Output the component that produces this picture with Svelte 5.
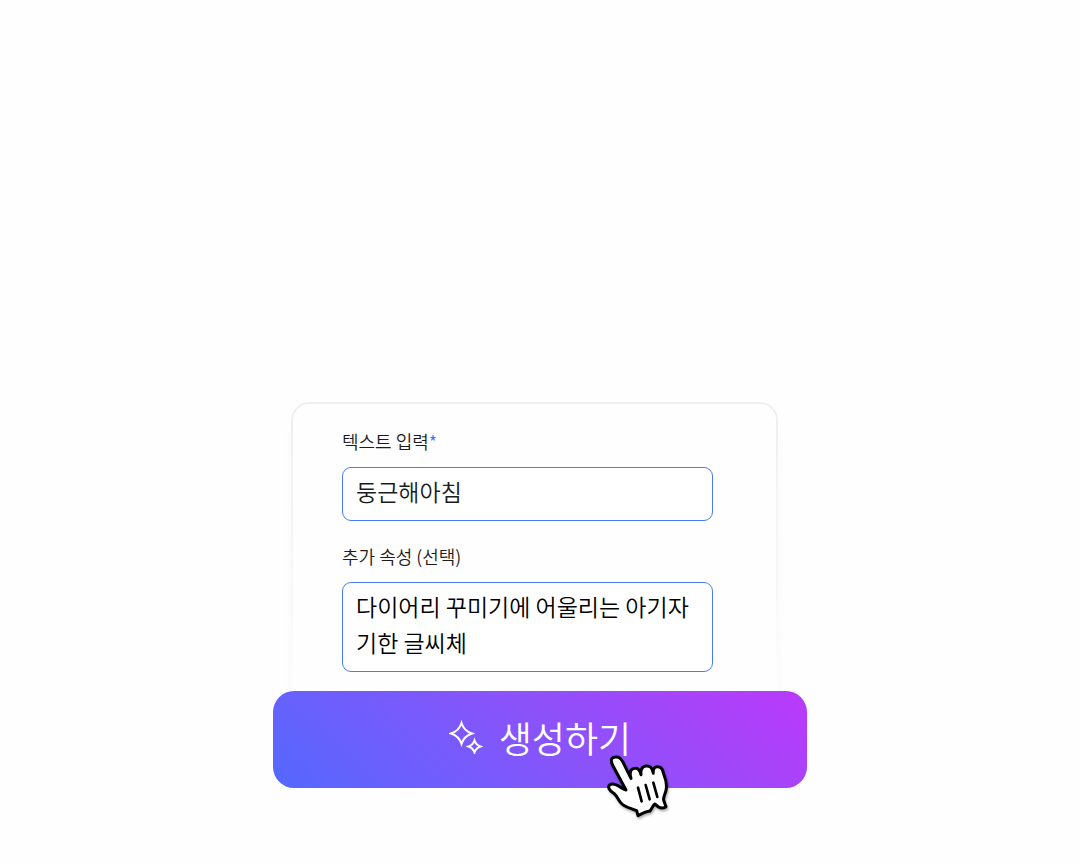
<script lang="ts">
	let text = $state('둥근해아침');
	let style = $state('다이어리 꾸미기에 어울리는 아기자기한 글씨체');
</script>

<main class="page">
	<form class="generator" onsubmit={(e) => e.preventDefault()}>
		<div class="card">
			<div class="field">
				<label for="text">텍스트 입력<span class="required">*</span></label>
				<input id="text" type="text" bind:value={text} />
			</div>
			<div class="field">
				<label for="style">추가 속성 (선택)</label>
				<textarea id="style" rows="2" bind:value={style}></textarea>
			</div>
		</div>

		<button class="generate" type="submit">
			<svg class="sparkle" viewBox="0 0 34 34" aria-hidden="true">
				<path d="M12.500 3Q15 11 23 13.500Q15 16 12.500 24Q10 16 2 13.500Q10 11 12.500 3Z" />
				<path d="M25.500 20.500Q27 25 31.500 26.500Q27 28 25.500 32.500Q24 28 19.500 26.500Q24 25 25.500 20.500Z" />
			</svg>
			<span>생성하기</span>

			<!-- hand pointer -->
			<svg class="pointer" viewBox="48 42 192 198" aria-hidden="true">
				<path
					class="hand"
					d="M108 150L68 76C60 58 65 52 76 51C88 49 94 57 98 65L123 115C118 98 120 89 130 86C141 82 149 87 153 104C151 87 156 80 167 78C179 76 187 82 190 100C188 85 195 79 204 80C216 81 218 90 221 102C228 119 232 134 228 151C225 164 219 171 221 181L228 200C218 207 207 205 195 192C190 194 187 204 180 213C168 214 156 220 144 227L140 212C125 205 107 202 96 192C84 181 82 169 75 163C67 155 57 153 56 142C56 132 66 130 77 134C89 138 97 147 108 150Z"
				/>
				<path class="crease" d="M144 143L155 184M167 135L179 178M190 128L202 171" />
			</svg>
		</button>
	</form>
</main>

<style>
	:global(body) {
		margin: 0;
		background: #fefefe;
	}
	.page {
		box-sizing: border-box;
		min-height: 100vh;
		padding: 24px 24px 76px;
		display: flex;
		flex-direction: column;
		align-items: center;
		justify-content: flex-end;
		font-family: 'Noto Sans CJK KR', 'Noto Sans', sans-serif;
		font-weight: 350;
	}
	.generator {
		width: 100%;
		max-width: 534px;
	}

	/* Card */
	.card {
		position: relative;
		display: flex;
		flex-direction: column;
		gap: 21px;
		margin: 0 29px 0 18px;
		padding: 25px 65px 19px 51px;
	}
	.card::before {
		content: '';
		position: absolute;
		inset: 0;
		border: 2px solid #efefef;
		border-bottom: 0;
		border-radius: 18px 18px 0 0;
		mask-image: linear-gradient(#000 10%, transparent);
		pointer-events: none;
	}
	.card::after {
		content: '';
		position: absolute;
		inset: 24px 0 0;
		z-index: -1;
		box-shadow: 0 4px 8px rgba(0, 0, 0, 0.03);
	}
	.field {
		display: flex;
		flex-direction: column;
		gap: 12px;
	}
	label {
		color: #1c1c1c;
		font-size: 18px;
		line-height: 28px;
	}
	.required {
		color: #3b72ff;
	}
	input,
	textarea {
		box-sizing: border-box;
		width: 100%;
		margin: 0;
		border: 1px solid #4a7af5;
		border-radius: 9px;
		background: #fff;
		font: inherit;
		font-size: 23px;
		line-height: 36px;
		outline: none;
	}
	input {
		height: 54px;
		padding: 5px 13px 11px;
		color: #1c1c1c;
	}
	textarea {
		display: block;
		padding: 5px 13px 11px;
		color: #000;
		resize: none;
		overflow: hidden;
		word-break: break-all;
	}

	/* Button */
	.generate {
		position: relative;
		display: flex;
		align-items: center;
		justify-content: center;
		gap: 16px;
		width: 100%;
		height: 97px;
		padding: 0 0 6px;
		border: 0;
		border-radius: 21px;
		background: linear-gradient(42deg, #5468ff 0%, #8a53fa 52%, #b63cfa 95%);
		color: #fff;
		font: inherit;
		font-size: 36px;
		cursor: pointer;
	}
	.sparkle {
		width: 34px;
		height: 34px;
		fill: none;
		stroke: #fff;
		stroke-width: 2;
		stroke-miterlimit: 6;
	}
	.pointer {
		position: absolute;
		top: 63px;
		left: 333px;
		width: 64px;
		height: 66px;
		filter: drop-shadow(1px 2px 1px rgba(0, 0, 0, 0.3));
		overflow: visible;
	}
	.hand {
		fill: #fff;
		stroke: #000;
		stroke-width: 9;
		stroke-linejoin: round;
	}
	.crease {
		fill: none;
		stroke: #000;
		stroke-width: 8;
		stroke-linecap: round;
	}
</style>
